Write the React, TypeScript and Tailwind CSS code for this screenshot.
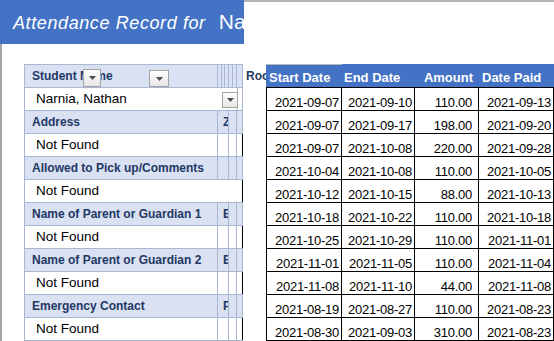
const records = [
  ["2021-09-07", "2021-09-10", "110.00", "2021-09-13"],
  ["2021-09-07", "2021-09-17", "198.00", "2021-09-20"],
  ["2021-09-07", "2021-10-08", "220.00", "2021-09-28"],
  ["2021-10-04", "2021-10-08", "110.00", "2021-10-05"],
  ["2021-10-12", "2021-10-15", "88.00", "2021-10-13"],
  ["2021-10-18", "2021-10-22", "110.00", "2021-10-18"],
  ["2021-10-25", "2021-10-29", "110.00", "2021-11-01"],
  ["2021-11-01", "2021-11-05", "110.00", "2021-11-04"],
  ["2021-11-08", "2021-11-10", "44.00", "2021-11-08"],
  ["2021-08-19", "2021-08-27", "110.00", "2021-08-23"],
  ["2021-08-30", "2021-09-03", "310.00", "2021-08-23"],
];

const fields = [
  { label: "Address", clip: "Z", plain: false },
  { label: "Allowed to Pick up/Comments", clip: "", plain: true },
  { label: "Name of Parent or Guardian 1", clip: "E", plain: false },
  { label: "Name of Parent or Guardian 2", clip: "E", plain: false },
  { label: "Emergency Contact", clip: "P", plain: false },
];

function Dropdown({ className }: { className: string }) {
  return (
    <span
      className={`absolute flex items-center justify-center border border-[#a3a3a3] bg-linear-to-b from-white to-[#e6e6e6] ${className}`}
    >
      <svg width="7" height="4" viewBox="0 0 7 4">
        <path d="M0 0h7L3.5 4z" fill="#4d4d4d" />
      </svg>
    </span>
  );
}

function HeadRow({ label, clip }: { label: string; clip: string }) {
  return (
    <div className="flex h-[23px] border-b border-[#a9b8d0] bg-[#d9e1f2] text-[12px] font-bold leading-[22px] text-[#1f3864]">
      <div className="w-[193px] border-r border-[#a9b8d0] pl-[7px] whitespace-nowrap">{label}</div>
      <div className="w-[11px] overflow-hidden border-r border-[#a9b8d0] pl-[5px]">{clip}</div>
      <div className="w-[8px] border-r border-[#a9b8d0]" />
      <div className="w-[6px] border-r border-[#a9b8d0]" />
    </div>
  );
}

function ValueRow({ plain }: { plain: boolean }) {
  return (
    <div className="flex h-[23px] border-b border-[#a9b8d0] bg-white text-[13.5px] leading-[22px] text-black">
      <div className={plain ? "w-[193px] pl-[11px]" : "w-[193px] border-r border-[#a9b8d0] pl-[11px]"}>Not Found</div>
      <div className={plain ? "w-[11px]" : "w-[11px] border-r border-[#a9b8d0]"} />
      <div className={plain ? "w-[8px]" : "w-[8px] border-r border-[#a9b8d0]"} />
      <div className="w-[6px] border-r border-black" />
    </div>
  );
}

export default function App() {
  return (
    <div className="h-[341px] w-[554px] overflow-hidden bg-white font-['Liberation_Sans',sans-serif]">
      <div className="flex h-[44px]">
        <div className="flex h-[44px] w-[244px] shrink-0 items-baseline overflow-hidden whitespace-nowrap bg-[#4472c4] pl-[13px] pt-[11px] leading-none text-white">
          <span className="text-[18px] italic tracking-[0.6px]">Attendance Record for</span>
          <span className="ml-[13px] text-[21px]">Narnia, Nathan</span>
        </div>
        <div className="flex-1 border-t-2 border-[#b4b4b4]" />
      </div>

      <div className="flex h-[297px] border-l-2 border-[#a6a6a6] pt-[20px]">
        {/* student info */}
        <div className="ml-[22px] w-[219px] shrink-0 border-l border-t border-[#a9b8d0]">
          <div className="relative flex h-[23px] border-b border-[#a9b8d0] bg-[#d9e1f2] text-[12px] font-bold leading-[22px] text-[#1f3864]">
            <div className="w-[193px] border-r border-[#a9b8d0] pl-[7px] whitespace-nowrap">Student Name</div>
            <div className="w-[4px] border-r border-[#a9b8d0]" />
            <div className="w-[3px] border-r border-[#a9b8d0]" />
            <div className="w-[4px] border-r border-[#a9b8d0]" />
            <div className="w-[4px] border-r border-[#a9b8d0]" />
            <div className="w-[4px] border-r border-[#a9b8d0]" />
            <div className="w-[6px] border-r border-[#a9b8d0]" />
            <Dropdown className="left-[58px] top-[4px] h-[18px] w-[18px]" />
            <Dropdown className="left-[124px] top-[5px] h-[17px] w-[20px]" />
          </div>
          <div className="relative flex h-[23px] border-b border-[#a9b8d0] bg-white text-[13.5px] leading-[22px] text-black">
            <div className="w-[212px] pl-[11px]">Narnia, Nathan</div>
            <div className="w-[6px] border-x border-[#a9b8d0]" />
            <Dropdown className="left-[197px] top-[4px] h-[16px] w-[16px]" />
          </div>
          {fields.map((f) => (
            <div key={f.label}>
              <HeadRow label={f.label} clip={f.clip} />
              <ValueRow plain={f.plain} />
            </div>
          ))}
        </div>

        <div className="h-[23px] w-[23px] shrink-0 overflow-hidden pl-[3px] pt-[1px] text-[12px] font-bold leading-[22px] text-[#1f3864]">
          Room
        </div>

        {/* payments */}
        <div className="shrink-0 text-[13px] leading-none">
          <div className="flex h-[23px] bg-[#4472c4] font-bold text-white">
            <div className="flex w-[76px] items-end border-t border-[#b9b9b9] pb-[3px] pl-[3px]">Start Date</div>
            <div className="flex w-[73px] items-end pb-[3px] pl-[2px]">End Date</div>
            <div className="flex w-[64px] items-end justify-end pb-[3px] pr-[6px]">Amount</div>
            <div className="flex w-[76px] items-end pb-[3px] pl-[3px]">Date Paid</div>
          </div>
          <div className="border-l border-t border-black tracking-[-0.25px] text-black">
            {records.map((r, i) => (
              <div key={i} className="flex h-[23px] border-b border-black">
                <div className="flex w-[75px] items-end justify-end border-r border-black pb-[1px] pr-[2px]">{r[0]}</div>
                <div className="flex w-[73px] items-end justify-end border-r border-black pb-[1px] pr-[2px]">{r[1]}</div>
                <div className="flex w-[64px] items-end justify-end border-r border-black pb-[1px] pr-[6px]">{r[2]}</div>
                <div className="flex w-[75px] items-end justify-end border-r border-black pb-[1px] pr-[2px]">{r[3]}</div>
              </div>
            ))}
          </div>
        </div>
      </div>
    </div>
  );
}
